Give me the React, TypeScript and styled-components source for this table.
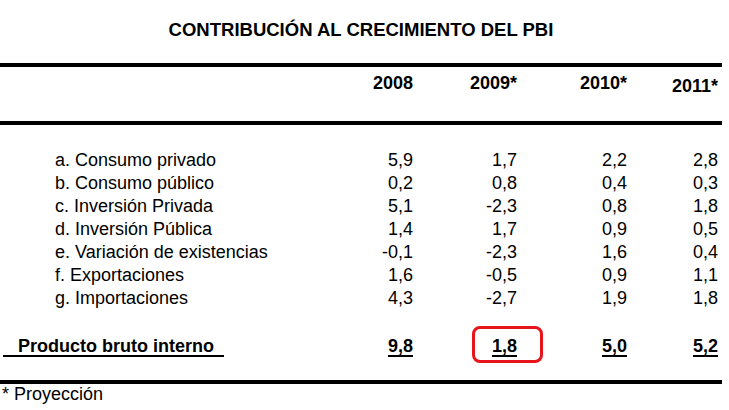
import React from "react";
import styled, { createGlobalStyle } from "styled-components";

const Global = createGlobalStyle`
  html, body { margin: 0; padding: 0; background: #ffffff; }
  body { font-family: "Liberation Sans", Arial, sans-serif; color: #000; }
`;

const Page = styled.div`
  width: 722px;
  display: flex;
  flex-direction: column;
`;

const Title = styled.h1`
  margin: 0;
  padding-top: 20px;
  height: 63px;
  box-sizing: border-box;
  text-align: center;
  font-size: 18.5px;
  font-weight: bold;
  line-height: 20px;
`;

const Rule = styled.div<{ $gap?: number }>`
  height: 4px;
  background: #000;
  margin-top: ${(p) => p.$gap ?? 0}px;
`;

const Grid = styled.div`
  display: grid;
  grid-template-columns: 323px 90px 104px 110px 91px;
`;

const HeadRow = styled(Grid)`
  height: 54px;
`;

const HeadCell = styled.div<{ $drop?: number }>`
  text-align: right;
  font-weight: bold;
  font-size: 18px;
  line-height: 20px;
  padding-top: ${(p) => 6 + (p.$drop ?? 0)}px;
`;

const Body = styled.div`
  padding-top: 24px;
  display: flex;
  flex-direction: column;
`;

const Row = styled(Grid)`
  height: 23px;
  align-items: center;
  font-size: 18px;
  line-height: 23px;
`;

const Label = styled.div`
  padding-left: 55px;
  white-space: nowrap;
`;

const Num = styled.div`
  text-align: right;
`;

const TotalRow = styled(Grid)`
  margin-top: 17px;
  height: 38px;
  align-items: center;
  font-weight: bold;
  font-size: 18px;
  line-height: 20px;
`;

const Underlined = styled.span`
  text-decoration: underline;
  text-decoration-thickness: 2px;
  text-underline-offset: 3px;
  white-space: pre;
`;

const TotalLabel = styled.div`
  padding-left: 3px;
`;

const TotalNum = styled.div`
  text-align: right;
  position: relative;
  height: 38px;
  line-height: 38px;
`;

const Highlight = styled.div`
  position: absolute;
  left: 59px;
  top: -1px;
  width: 71px;
  height: 37px;
  box-sizing: border-box;
  border: 3px solid #e8141c;
  border-radius: 8px;
`;

const Footnote = styled.div`
  font-size: 18px;
  line-height: 20px;
  padding-left: 2px;
`;

const rows: [string, string, string, string, string][] = [
  ["a. Consumo privado", "5,9", "1,7", "2,2", "2,8"],
  ["b. Consumo público", "0,2", "0,8", "0,4", "0,3"],
  ["c. Inversión Privada", "5,1", "-2,3", "0,8", "1,8"],
  ["d. Inversión Pública", "1,4", "1,7", "0,9", "0,5"],
  ["e. Variación de existencias", "-0,1", "-2,3", "1,6", "0,4"],
  ["f. Exportaciones", "1,6", "-0,5", "0,9", "1,1"],
  ["g. Importaciones", "4,3", "-2,7", "1,9", "1,8"],
];

export default function App() {
  return (
    <Page>
      <Global />
      <Title>CONTRIBUCIÓN AL CRECIMIENTO DEL PBI</Title>
      <Rule />
      <HeadRow>
        <div />
        <HeadCell>2008</HeadCell>
        <HeadCell>2009*</HeadCell>
        <HeadCell>2010*</HeadCell>
        <HeadCell $drop={3}>2011*</HeadCell>
      </HeadRow>
      <Rule />
      <Body>
        {rows.map((r) => (
          <Row key={r[0]}>
            <Label>{r[0]}</Label>
            <Num>{r[1]}</Num>
            <Num>{r[2]}</Num>
            <Num>{r[3]}</Num>
            <Num>{r[4]}</Num>
          </Row>
        ))}
      </Body>
      <TotalRow>
        <TotalLabel>
          <Underlined>{"   Producto bruto interno  "}</Underlined>
        </TotalLabel>
        <TotalNum>
          <Underlined>9,8</Underlined>
        </TotalNum>
        <TotalNum>
          <Highlight />
          <Underlined>1,8</Underlined>
        </TotalNum>
        <TotalNum>
          <Underlined>5,0</Underlined>
        </TotalNum>
        <TotalNum>
          <Underlined>5,2</Underlined>
        </TotalNum>
      </TotalRow>
      <Rule $gap={15} />
      <Footnote>* Proyección</Footnote>
    </Page>
  );
}
